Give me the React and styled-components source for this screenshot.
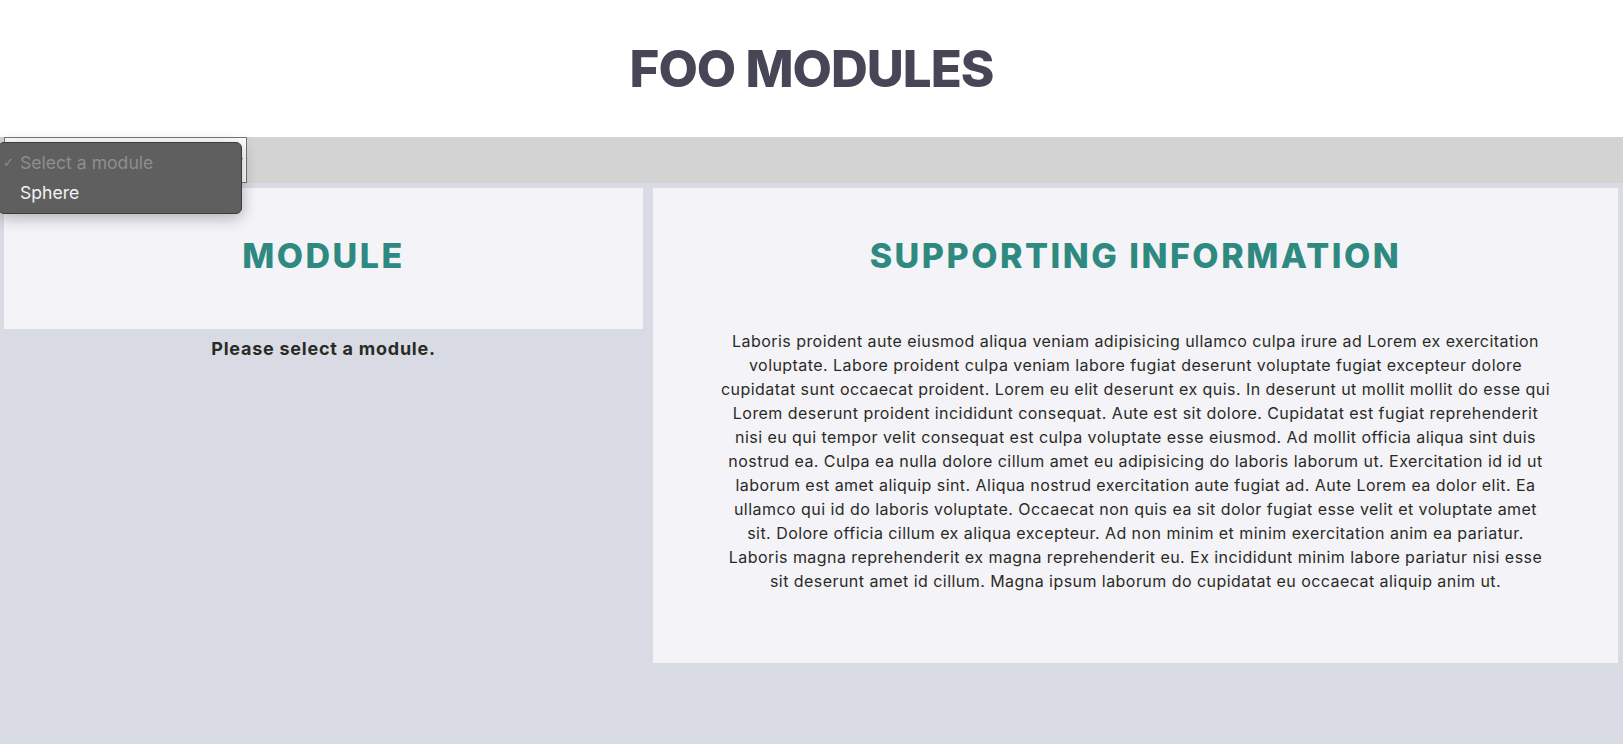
import React from 'react'
import styled, { createGlobalStyle } from 'styled-components'

const GlobalStyle = createGlobalStyle`
  html, body {
    margin: 0;
    padding: 0;
    background: #d8dbe4;
    font-family: Inter, "Noto Sans", sans-serif;
  }
  #root {
    min-height: 100vh;
    display: flex;
    flex-direction: column;
  }
`

const colors = {
  title: '#464656',
  teal: '#2e8a80',
  text: '#2b2b25',
  panel: '#f3f3f8',
  page: '#d8dbe4',
  bar: '#d3d3d3',
}

const Header = styled.header`
  height: 137px;
  background: #fff;
  display: flex;
  align-items: center;
  justify-content: center;
`
const Title = styled.h1`
  margin: 0;
  font-size: 51px;
  font-weight: 800;
  letter-spacing: -1px;
  color: ${colors.title};
`
const Toolbar = styled.div`
  position: relative;
  height: 46px;
  background: ${colors.bar};
  display: flex;
  padding-left: 4px;
`
const ModuleSelect = styled.select`
  width: 243px;
  height: 46px;
  box-sizing: border-box;
  border: 1px solid #767676;
  background: #fff;
  font-family: Inter, sans-serif;
  font-size: 15px;
  padding: 0 8px;
`
const Menu = styled.div`
  position: absolute;
  left: -2px;
  top: 5px;
  width: 244px;
  box-sizing: border-box;
  padding: 4px 0 6px;
  background: #5f5f5f;
  border: 1px solid #3c3c3c;
  border-radius: 6px;
  box-shadow: 0 4px 16px rgba(0, 0, 0, 0.28);
  z-index: 10;
`
const MenuItem = styled.div`
  position: relative;
  height: 30px;
  display: flex;
  align-items: center;
  padding-left: 21px;
  font-family: Inter, "Liberation Sans", sans-serif;
  font-size: 17.6px;
  color: ${p => (p.disabled ? '#8e8e8e' : '#f2f2f2')};
`
const Check = styled.span`
  position: absolute;
  left: 4px;
  font-family: "DejaVu Sans", sans-serif;
  font-size: 13px;
  color: #8e8e8e;
`
const Main = styled.main`
  flex: 1;
  background: ${colors.page};
  display: grid;
  grid-template-columns: 639px 1fr;
  gap: 10px;
  align-items: start;
  padding: 5px 5px 0 4px;
`
const Column = styled.div`
  display: flex;
  flex-direction: column;
`
const Panel = styled.section`
  background: ${colors.panel};
  padding: 46px 0 ${p => (p.tall ? '70px' : '52px')};
  display: flex;
  flex-direction: column;
  align-items: center;
`
const PanelTitle = styled.h2`
  margin: 0;
  font-size: 34px;
  line-height: 43px;
  font-weight: 800;
  letter-spacing: 2.5px;
  color: ${colors.teal};
  text-align: center;
`
const Message = styled.p`
  margin: 6px 0 0;
  font-size: 18px;
  line-height: 27px;
  font-weight: 700;
  letter-spacing: 0.75px;
  color: ${colors.text};
  text-align: center;
`
const Body = styled.p`
  margin: 52px 0 0;
  font-size: 16px;
  line-height: 24px;
  letter-spacing: 0.45px;
  color: ${colors.text};
  text-align: center;
  white-space: nowrap;
`

const lines = [
  'Laboris proident aute eiusmod aliqua veniam adipisicing ullamco culpa irure ad Lorem ex exercitation',
  'voluptate. Labore proident culpa veniam labore fugiat deserunt voluptate fugiat excepteur dolore',
  'cupidatat sunt occaecat proident. Lorem eu elit deserunt ex quis. In deserunt ut mollit mollit do esse qui',
  'Lorem deserunt proident incididunt consequat. Aute est sit dolore. Cupidatat est fugiat reprehenderit',
  'nisi eu qui tempor velit consequat est culpa voluptate esse eiusmod. Ad mollit officia aliqua sint duis',
  'nostrud ea. Culpa ea nulla dolore cillum amet eu adipisicing do laboris laborum ut. Exercitation id id ut',
  'laborum est amet aliquip sint. Aliqua nostrud exercitation aute fugiat ad. Aute Lorem ea dolor elit. Ea',
  'ullamco qui id do laboris voluptate. Occaecat non quis ea sit dolor fugiat esse velit et voluptate amet',
  'sit. Dolore officia cillum ex aliqua excepteur. Ad non minim et minim exercitation anim ea pariatur.',
  'Laboris magna reprehenderit ex magna reprehenderit eu. Ex incididunt minim labore pariatur nisi esse',
  'sit deserunt amet id cillum. Magna ipsum laborum do cupidatat eu occaecat aliquip anim ut.',
]

const App = () => {
  return (
    <>
      <GlobalStyle />
      <Header>
        <Title>FOO MODULES</Title>
      </Header>
      <Toolbar>
        <ModuleSelect defaultValue="">
          <option value="" disabled>Select a module</option>
          <option value="sphere">Sphere</option>
        </ModuleSelect>
        <Menu>
          <MenuItem disabled><Check>✓</Check>Select a module</MenuItem>
          <MenuItem>Sphere</MenuItem>
        </Menu>
      </Toolbar>
      <Main>
        <Column>
          <Panel>
            <PanelTitle>MODULE</PanelTitle>
          </Panel>
          <Message>Please select a module.</Message>
        </Column>
        <Panel tall>
          <PanelTitle>SUPPORTING INFORMATION</PanelTitle>
          <Body>
            {lines.map((l, i) => (
              <React.Fragment key={i}>
                {l}
                {i < lines.length - 1 && <br />}
              </React.Fragment>
            ))}
          </Body>
        </Panel>
      </Main>
    </>
  )
}

export default App
